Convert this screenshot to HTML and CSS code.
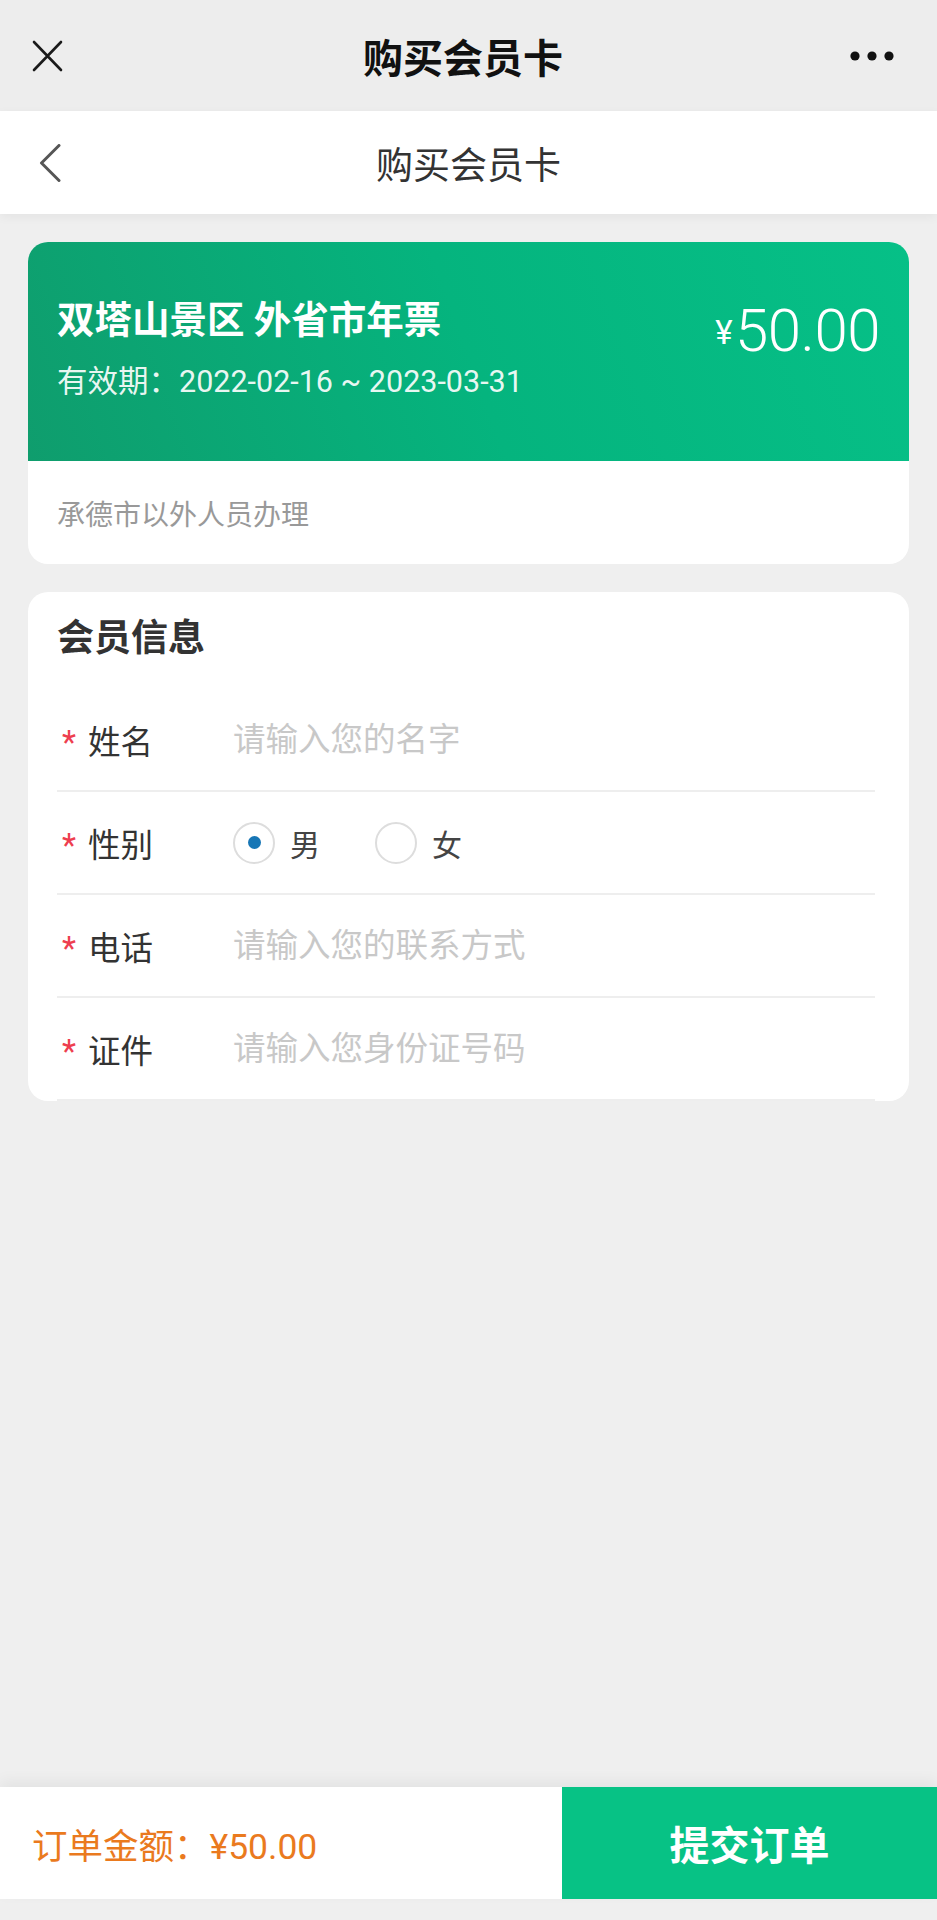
FILE: index.html
```html
<!DOCTYPE html>
<html lang="zh-CN">
<head>
    <meta charset="UTF-8">
    <meta name="viewport" content="width=device-width, initial-scale=1.0">
    <title>购买会员卡</title>
    <link rel="stylesheet" href="styles.css">
</head>
<body>
    <div class="wx-bar">
        <svg class="wx-close" width="31" height="32" viewBox="0 0 31 32">
            <path d="M2 2 L29 30 M29 2 L2 30" />
        </svg>
        <div class="wx-title">购买会员卡</div>
        <svg class="wx-more" width="44" height="12" viewBox="0 0 44 12">
            <circle cx="5" cy="6" r="4.6" />
            <circle cx="22" cy="6" r="4.6" />
            <circle cx="39" cy="6" r="4.6" />
        </svg>
    </div>

    <header class="page-head">
        <svg class="back" width="22" height="38" viewBox="0 0 22 38">
            <polyline points="20,1.5 2.5,19 20,36.5" />
        </svg>
        <h1>购买会员卡</h1>
    </header>

    <main class="content">
        <section class="card ticket">
            <div class="ticket-top">
                <div class="ticket-info">
                    <h2>双塔山景区 外省市年票</h2>
                    <p class="ticket-date">有效期：2022-02-16 ~ 2023-03-31</p>
                </div>
                <div class="ticket-price"><span class="yen">¥</span>50.00</div>
            </div>
            <div class="ticket-note">承德市以外人员办理</div>
        </section>

        <section class="card member">
            <h3>会员信息</h3>
            <div class="form-row">
                <label class="field-label"><span class="req">*</span>姓名</label>
                <input type="text" placeholder="请输入您的名字">
            </div>
            <div class="form-row">
                <label class="field-label"><span class="req">*</span>性别</label>
                <div class="radio-group">
                    <div class="radio checked"><span class="radio-dot"></span>男</div>
                    <div class="radio"><span class="radio-dot"></span>女</div>
                </div>
            </div>
            <div class="form-row">
                <label class="field-label"><span class="req">*</span>电话</label>
                <input type="text" placeholder="请输入您的联系方式">
            </div>
            <div class="form-row">
                <label class="field-label"><span class="req">*</span>证件</label>
                <input type="text" placeholder="请输入您身份证号码">
            </div>
        </section>
    </main>

    <footer class="order-bar">
        <div class="order-total">订单金额：¥50.00</div>
        <button class="submit">提交订单</button>
    </footer>
</body>
</html>
```

FILE: styles.css
```css
body {
    font-family: Roboto, "Noto Sans CJK SC", sans-serif;
    margin: 0;
    height: 100vh;
    box-sizing: border-box;
    padding-bottom: 21px;
    display: flex;
    flex-direction: column;
    background-color: #efefef;
    color: #333;
}
.wx-bar {
    height: 111px;
    flex-shrink: 0;
    display: grid;
    grid-template-columns: 1fr auto 1fr;
    align-items: center;
    padding: 0 43px 0 32px;
    background: #ededed;
}
.wx-close {
    fill: none;
    stroke: #1a1a1a;
    stroke-width: 2.6;
    stroke-linecap: round;
}
.wx-title {
    font-size: 40px;
    font-weight: bold;
    color: #111;
}
.wx-more {
    justify-self: end;
    fill: #111;
}
.page-head {
    height: 103px;
    flex-shrink: 0;
    display: grid;
    grid-template-columns: 1fr auto 1fr;
    align-items: center;
    padding: 0 39px;
    background: #fff;
    box-shadow: 0 3px 10px rgba(0, 0, 0, 0.05);
    position: relative;
}
.back {
    fill: none;
    stroke: #555;
    stroke-width: 3;
    stroke-linecap: round;
    stroke-linejoin: round;
}
.page-head h1 {
    margin: 0;
    font-size: 37px;
    font-weight: normal;
    color: #333;
}
.content {
    flex: 1;
    padding: 28px;
}
.card {
    background: #fff;
    border-radius: 20px;
    overflow: hidden;
    margin-bottom: 28px;
}
.ticket-top {
    height: 219px;
    box-sizing: border-box;
    padding: 55px 29px 0 29px;
    display: flex;
    justify-content: space-between;
    align-items: flex-start;
    color: #fff;
    background: linear-gradient(70deg, #0f9d6d 0%, #05b47e 50%, #06c087 100%);
}
.ticket-info h2 {
    margin: 0;
    font-size: 37.5px;
    line-height: 46px;
    font-weight: bold;
}
.ticket-date {
    margin: 19px 0 0;
    font-size: 30.5px;
    line-height: 40px;
    color: rgba(255, 255, 255, 0.92);
}
.ticket-price {
    margin-top: 4px;
    font-size: 60px;
    line-height: 60px;
    font-weight: 300;
    letter-spacing: -0.5px;
}
.yen {
    font-size: 33px;
    font-weight: normal;
    vertical-align: 7px;
    margin-right: 3px;
}
.ticket-note {
    height: 103px;
    display: flex;
    align-items: center;
    padding: 0 29px;
    font-size: 28px;
    color: #999;
}
.member h3 {
    margin: 0;
    padding: 24px 29px 27px;
    font-size: 37px;
    line-height: 46px;
    font-weight: bold;
    color: #333;
}
.form-row {
    height: 103px;
    box-sizing: border-box;
    margin: 0 34px 0 29px;
    border-bottom: 2px solid #eee;
    display: flex;
    align-items: center;
}
.field-label {
    width: 176px;
    flex-shrink: 0;
    box-sizing: border-box;
    padding-left: 5px;
    font-size: 32.5px;
    color: #333;
}
.req {
    display: inline-block;
    width: 26px;
    color: #ee3e4f;
}
.form-row input {
    flex: 1;
    min-width: 0;
    border: 0;
    outline: 0;
    padding: 0;
    background: transparent;
    font-family: inherit;
    font-size: 32.5px;
    color: #333;
}
.form-row input::placeholder {
    color: #c8c8c8;
}
.radio-group {
    display: flex;
    align-items: center;
}
.radio {
    display: flex;
    align-items: center;
    margin-right: 55px;
    font-size: 30px;
    color: #444;
}
.radio-dot {
    width: 42px;
    height: 42px;
    box-sizing: border-box;
    border: 2px solid #ddd;
    border-radius: 50%;
    margin-right: 15px;
    display: flex;
    align-items: center;
    justify-content: center;
}
.radio.checked .radio-dot::after {
    content: "";
    width: 13px;
    height: 13px;
    border-radius: 50%;
    background: #1776b5;
}
.order-bar {
    height: 112px;
    flex-shrink: 0;
    display: flex;
    background: #fff;
    box-shadow: 0 -6px 14px rgba(0, 0, 0, 0.05);
}
.order-total {
    flex: 1;
    display: flex;
    align-items: center;
    padding-left: 32px;
    font-size: 35.5px;
    color: #ea7a1e;
}
.submit {
    width: 375px;
    border: 0;
    background: #07c285;
    color: #fff;
    font-family: inherit;
    font-size: 40px;
    font-weight: bold;
}
```
